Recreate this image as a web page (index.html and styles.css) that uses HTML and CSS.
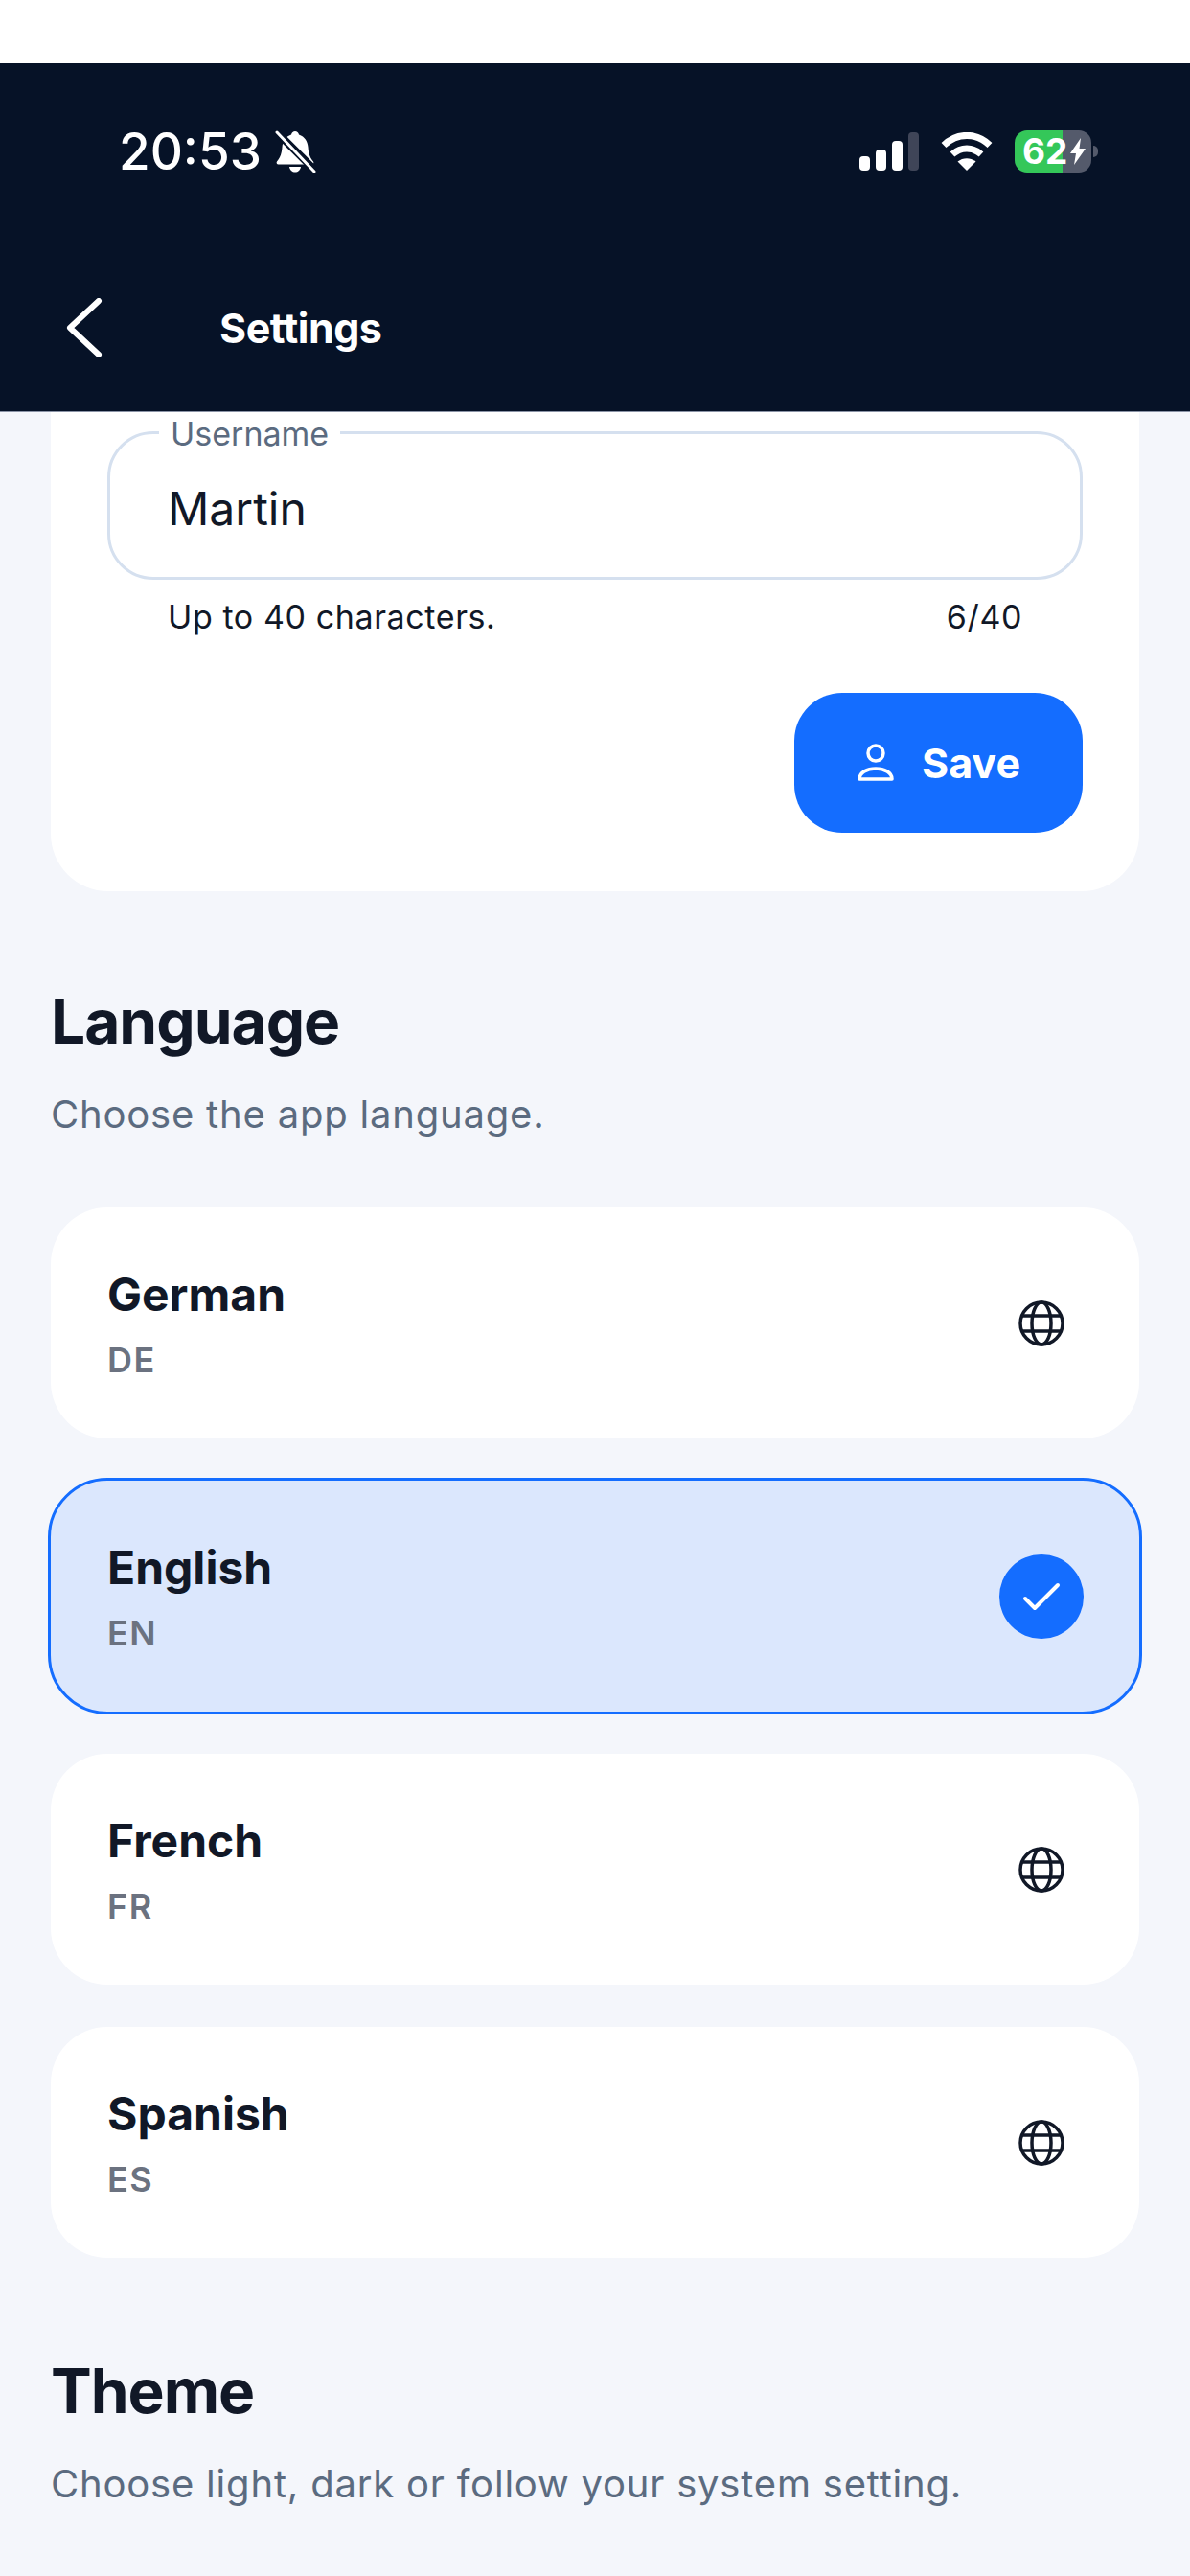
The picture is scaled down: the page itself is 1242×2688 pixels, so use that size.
FILE: index.html
```html
<!DOCTYPE html>
<html lang="en">
<head>
    <meta charset="UTF-8">
    <meta name="viewport" content="width=device-width, initial-scale=1.0">
    <title>Settings</title>
    <link rel="stylesheet" href="styles.css">
</head>
<body>

    <div class="top-strip"></div>

    <header class="app-header">
        <div class="status-bar">
            <div class="status-left">
                <span class="time">20:53</span>
                <svg class="bell" viewBox="0 0 44 46">
                    <path fill="#fff" d="M22 2c2 0 3.500 1.500 4 3.500 6 2 9 7 9.500 13 .5 6 1.500 10 5.500 15 1 1.500 0 3-1.500 3h-35c-1.500 0-2.500-1.500-1.500-3 4-5 5-9 5.500-15 .5-6 3.500-11 9.500-13C18.500 3.500 20 2 22 2z"/>
                    <path fill="#fff" d="M16 39h12c-.5 3.500-3 5.500-6 5.500s-5.500-2-6-5.500z"/>
                    <path stroke="#061227" stroke-width="8" d="M2 2l42 42"/>
                    <path stroke="#fff" stroke-width="3" stroke-linecap="round" d="M3 3l39 41"/>
                </svg>
            </div>
            <div class="status-right">
                <div class="signal">
                    <span class="bar bar-1"></span>
                    <span class="bar bar-2"></span>
                    <span class="bar bar-3"></span>
                    <span class="bar bar-4"></span>
                </div>
                <svg class="wifi" viewBox="0 0 54 40">
                    <path fill="none" stroke="#fff" stroke-width="7" d="M3 13.500C17 0 37 0 51 13.500"/>
                    <path fill="none" stroke="#fff" stroke-width="7" d="M12 23c9-8 21-8 30 0"/>
                    <path fill="#fff" d="M27 40l-9.500-9.500c5.500-4.500 13.500-4.500 19 0z"/>
                </svg>
                <div class="battery">
                    <span class="battery-num">62</span>
                    <svg class="bolt" viewBox="0 0 16 28">
                        <path fill="#fff" d="M11 0L0 16h6L4 28l12-17H9.500z"/>
                    </svg>
                </div>
            </div>
        </div>
        <nav class="nav-bar">
            <svg class="back" viewBox="0 0 40 62">
                <path fill="none" stroke="#fff" stroke-width="6" stroke-linecap="round" stroke-linejoin="round" d="M34 3L4 31l30 28"/>
            </svg>
            <h1 class="nav-title">Settings</h1>
        </nav>
    </header>

    <main class="content">
        <section class="profile-card">
            <div class="field">
                <label class="field-label">Username</label>
                <span class="field-value">Martin</span>
            </div>
            <div class="field-help">
                <span>Up to 40 characters.</span>
                <span>6/40</span>
            </div>
            <div class="actions">
                <button class="save-btn">
                    <svg class="person" viewBox="0 0 40 40">
                        <circle cx="20" cy="10" r="8" fill="none" stroke="#fff" stroke-width="3.500"/>
                        <path fill="none" stroke="#fff" stroke-width="3.500" stroke-linejoin="round" d="M3 37c0-7 8-11 17-11s17 4 17 11z"/>
                    </svg>
                    Save
                </button>
            </div>
        </section>

        <h2 class="section-title">Language</h2>
        <p class="section-sub">Choose the app language.</p>

        <div class="lang-list">
            <div class="lang-row">
                <div class="lang-text">
                    <div class="lang-name">German</div>
                    <div class="lang-code">DE</div>
                </div>
                <div class="lang-icon">
                    <svg class="globe" viewBox="0 0 48 48">
                        <circle cx="24" cy="24" r="22" fill="none" stroke="#111827" stroke-width="3.500"/>
                        <ellipse cx="24" cy="24" rx="10" ry="22" fill="none" stroke="#111827" stroke-width="3.500"/>
                        <path stroke="#111827" stroke-width="3.500" d="M4 16h40M4 32h40"/>
                    </svg>
                </div>
            </div>
            <div class="lang-row selected">
                <div class="lang-text">
                    <div class="lang-name">English</div>
                    <div class="lang-code">EN</div>
                </div>
                <div class="lang-icon">
                    <span class="check-badge">
                        <svg class="check" viewBox="0 0 40 30">
                            <path fill="none" stroke="#fff" stroke-width="4" stroke-linecap="round" stroke-linejoin="round" d="M3 17l10 10L37 3"/>
                        </svg>
                    </span>
                </div>
            </div>
            <div class="lang-row">
                <div class="lang-text">
                    <div class="lang-name">French</div>
                    <div class="lang-code">FR</div>
                </div>
                <div class="lang-icon">
                    <svg class="globe" viewBox="0 0 48 48">
                        <circle cx="24" cy="24" r="22" fill="none" stroke="#111827" stroke-width="3.500"/>
                        <ellipse cx="24" cy="24" rx="10" ry="22" fill="none" stroke="#111827" stroke-width="3.500"/>
                        <path stroke="#111827" stroke-width="3.500" d="M4 16h40M4 32h40"/>
                    </svg>
                </div>
            </div>
            <div class="lang-row">
                <div class="lang-text">
                    <div class="lang-name">Spanish</div>
                    <div class="lang-code">ES</div>
                </div>
                <div class="lang-icon">
                    <svg class="globe" viewBox="0 0 48 48">
                        <circle cx="24" cy="24" r="22" fill="none" stroke="#111827" stroke-width="3.500"/>
                        <ellipse cx="24" cy="24" rx="10" ry="22" fill="none" stroke="#111827" stroke-width="3.500"/>
                        <path stroke="#111827" stroke-width="3.500" d="M4 16h40M4 32h40"/>
                    </svg>
                </div>
            </div>
        </div>

        <h2 class="section-title theme-title">Theme</h2>
        <p class="section-sub">Choose light, dark or follow your system setting.</p>

        <div class="theme-card"></div>
    </main>

</body>
</html>
```

FILE: styles.css
```css
* { box-sizing: border-box; }
html, body { margin: 0; padding: 0; }
body { width: 1242px; height: 2688px; overflow: hidden; background: #fff; font-family: Inter, "Noto Sans", sans-serif; color: #111827; }

.top-strip { height: 66px; background: #fff; }

.app-header { height: 364px; background: #061227; color: #fff; border-bottom: 1px solid #8a93a6; }
.status-bar { height: 184px; display: flex; align-items: center; justify-content: space-between; padding: 0 103px 0 124px; }
.status-left { display: flex; align-items: center; gap: 13px; }
.time { font-size: 53px; font-weight: 500; line-height: 60px; }
.bell { width: 44px; height: 46px; }
.status-right { display: flex; align-items: center; }
.signal { display: flex; align-items: flex-end; gap: 6px; height: 40px; }
.bar { width: 11px; border-radius: 4px; background: #fff; }
.bar-1 { height: 15px; }
.bar-2 { height: 22px; }
.bar-3 { height: 31px; }
.bar-4 { height: 40px; background: #3f4558; }
.wifi { width: 54px; height: 40px; margin-left: 23px; }
.battery { position: relative; width: 80px; height: 44px; margin-left: 23px; border-radius: 13px; background: linear-gradient(90deg, #34c759 62.5%, #545a6b 62.5%); display: flex; align-items: center; padding-left: 8px; }
.battery::after { content: ""; position: absolute; right: -7px; top: 16px; width: 5px; height: 12px; border-radius: 0 5px 5px 0; background: #545a6b; }
.battery-num { font-size: 37px; font-weight: 700; line-height: 44px; color: #fff; }
.bolt { width: 16px; height: 28px; margin-left: 3px; }

.nav-bar { height: 179px; display: flex; align-items: center; padding: 4px 0 0 69px; }
.back { width: 40px; height: 62px; }
.nav-title { margin: 0 0 0 120px; font-size: 43px; font-weight: 700; line-height: 54px; letter-spacing: -0.5px; }

.content { height: 2258px; overflow: hidden; background: #f4f6fb; padding: 0 53px; }

.profile-card { background: #fff; border-radius: 0 0 60px 60px; padding: 20px 59px 61px; }
.field { position: relative; height: 155px; border: 3px solid #d5e0ef; border-radius: 48px; padding: 48px 60px 0; }
.field-label { position: absolute; left: 51px; top: -17px; padding: 0 12px; background: #fff; font-size: 34px; line-height: 34px; color: #5b6b80; }
.field-value { font-size: 48px; line-height: 60px; }
.field-help { display: flex; justify-content: space-between; padding: 17px 63px 0; font-size: 34px; line-height: 44px; letter-spacing: 0.6px; }
.actions { display: flex; justify-content: flex-end; margin-top: 57px; }
.save-btn { width: 301px; height: 146px; display: flex; align-items: center; justify-content: center; gap: 28px; border: none; border-radius: 50px; background: #146dff; color: #fff; font-family: inherit; font-size: 43px; font-weight: 700; }
.person { width: 40px; height: 40px; }

.section-title { margin: 98px 0 0; font-size: 64px; font-weight: 700; line-height: 76px; letter-spacing: -1px; }
.section-sub { margin: 34px 0 0; font-size: 40px; line-height: 50px; color: #5b6b80; letter-spacing: 0.8px; }

.lang-list { display: flex; flex-direction: column; gap: 38px; margin: 69px -3px 0; }
.lang-row { height: 247px; display: flex; align-items: center; justify-content: space-between; padding: 0 58px 0 59px; background: #fff; background-clip: padding-box; border: 3px solid transparent; border-radius: 62px; }
.lang-row.selected { background: #dbe7fd; border-color: #146dff; background-clip: border-box; }
.lang-name { font-size: 48px; font-weight: 700; line-height: 60px; }
.lang-code { margin-top: 16px; font-size: 36px; font-weight: 600; line-height: 44px; letter-spacing: 1.5px; color: #6b7280; }
.lang-icon { width: 88px; display: flex; justify-content: center; }
.globe { width: 48px; height: 48px; }
.check-badge { width: 88px; height: 88px; display: flex; align-items: center; justify-content: center; border-radius: 50%; background: #146dff; }
.check { width: 40px; height: 30px; }

.theme-title { margin-top: 98px; }
.theme-card { height: 160px; margin-top: 71px; border-radius: 60px; background: linear-gradient(90deg, #061227 0%, #146dff 55%, #06b6ff 100%); }
```
